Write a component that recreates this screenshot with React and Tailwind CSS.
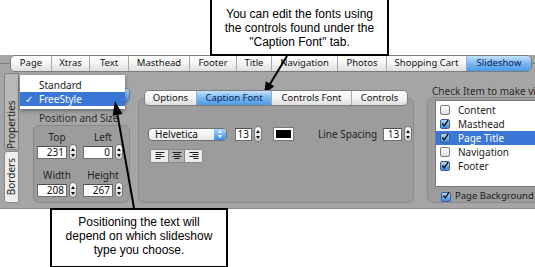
import React from "react";

const topTabs = [
  ["Page", "w-[40px]"],
  ["Xtras", "w-[38px]"],
  ["Text", "w-[39px]"],
  ["Masthead", "w-[61px]"],
  ["Footer", "w-[47px]"],
  ["Title", "w-[35px]"],
  ["Navigation", "w-[66px]"],
  ["Photos", "w-[49px]"],
  ["Shopping Cart", "w-[80px]"],
  ["Slideshow", "w-[65px]", true],
];

const fontTabs = [
  ["Options", "w-[51px]"],
  ["Caption Font", "w-[75px]", true],
  ["Controls Font", "w-[80px]"],
  ["Controls", "w-[56px]"],
];

const items = [
  ["Content", false],
  ["Masthead", true],
  ["Page Title", true, true],
  ["Navigation", false],
  ["Footer", true],
];

function Tab({ label, width, active }) {
  return (
    <div
      className={`${width} flex items-center justify-center border-l border-[#a9a9a9] first:border-l-0 text-[9.5px] whitespace-nowrap ${
        active
          ? "bg-linear-to-b from-[#c4e2fd] via-[#79b8f2] to-[#4d9ae7] text-[#0c2452]"
          : "bg-linear-to-b from-white via-[#f4f4f4] to-[#dedede] text-[#111]"
      }`}
    >
      {label}
    </div>
  );
}

function Stepper() {
  return (
    <div className="w-[8px] h-[16px] shrink-0 rounded-full border border-[#777] bg-linear-to-b from-white to-[#d8d8d8] flex flex-col items-center justify-center gap-[3px]">
      <svg width="4" height="3" viewBox="0 0 4 3">
        <path d="M2 0 L4 3 L0 3 Z" fill="#111" />
      </svg>
      <svg width="4" height="3" viewBox="0 0 4 3">
        <path d="M0 0 L4 0 L2 3 Z" fill="#111" />
      </svg>
    </div>
  );
}

function NumField({ value, width = "w-[30px]" }) {
  return (
    <div className="flex items-center gap-[2px] shrink-0">
      <div
        className={`${width} h-[13px] bg-white border border-[#6e6e6e] border-t-[#4e4e4e] text-right pr-[2px] text-[10px] leading-[11px] text-[#111]`}
      >
        {value}
      </div>
      <Stepper />
    </div>
  );
}

function Field({ label, value }) {
  return (
    <div className="w-[40px] mr-[6px] flex flex-col items-center">
      <div className="h-[12px] text-[10px] leading-[12px] text-[#222]">{label}</div>
      <div className="mt-[1px]">
        <NumField value={value} />
      </div>
    </div>
  );
}

function Check({ on }) {
  return (
    <div
      className={`w-[10px] h-[10px] shrink-0 rounded-[2px] border flex items-center justify-center ${
        on
          ? "border-[#3f5f8c] bg-linear-to-b from-[#b4dafc] to-[#3c8ae0]"
          : "border-[#7a7a7a] bg-linear-to-b from-white to-[#dedede]"
      }`}
    >
      {on && (
        <svg width="9" height="9" viewBox="0 0 9 9" className="-mt-[2px]">
          <path d="M1.5 4.5 L3.7 7.2 L8 0.8" stroke="#111" strokeWidth="1.6" fill="none" />
        </svg>
      )}
    </div>
  );
}

function AlignIcon({ kind }) {
  const lens = [9, 6, 9, 5];
  return (
    <svg width="10" height="8" viewBox="0 0 10 8">
      {lens.map((len, i) => {
        const x = kind === "left" ? 0.5 : kind === "right" ? 9.5 - len : (10 - len) / 2;
        return <rect key={i} x={x} y={i * 2} width={len} height="1" fill="#222" />;
      })}
    </svg>
  );
}

export default function App() {
  return (
    <div className="relative w-[535px] h-[267px] overflow-hidden bg-white [font-family:'Noto_Sans','DejaVu_Sans',sans-serif]">
      <div className="h-[55px]" />

      {/* window */}
      <div className="h-[154px] bg-[#a5a5a5] flex flex-col border-b border-[#8c8c8c]">
        {/* top tab strip */}
        <div className="h-[17px] flex items-center">
          <div className="w-[10px] h-px bg-[#7e7e7e]" />
          <div className="flex h-[17px] rounded-[5px] border border-[#7c7c7c] overflow-hidden">
            {topTabs.map(([label, w, active]) => (
              <Tab key={label} label={label} width={w} active={active} />
            ))}
          </div>
          <div className="flex-1 h-px bg-[#7e7e7e]" />
        </div>

        <div className="flex flex-1">
          {/* vertical tabs */}
          <div className="ml-[4px] w-[15px] shrink-0 flex flex-col pt-[1px]">
            <div className="h-[77px] bg-[#b9b9b9] border border-[#7f7f7f] rounded-l-[3px] flex justify-center pt-[9px]">
              <span className="[writing-mode:vertical-rl] rotate-180 text-[10px] leading-[13px] text-[#222]">
                Properties
              </span>
            </div>
            <div className="h-[52px] mt-[1px] bg-[#eeeeee] border border-[#8a8a8a] rounded-l-[3px] flex items-center justify-center">
              <span className="[writing-mode:vertical-rl] rotate-180 text-[10px] leading-[13px] text-[#222]">
                Borders
              </span>
            </div>
          </div>

          {/* position and size */}
          <div className="ml-[14px] w-[97px] shrink-0 flex flex-col">
            <div className="mt-[16px] h-[15px] ml-[4px] rounded-[4px] border border-[#6f6f6f] bg-white flex justify-end overflow-hidden">
              <div className="w-[12px] bg-linear-to-b from-[#a9d5fc] to-[#3b8ce4]" />
            </div>
            <div className="mt-[9px] pl-[6px] h-[13px] text-[10px] leading-[13px] text-[#2a2a2a] whitespace-nowrap">
              Position and Size
            </div>
            <div className="h-[78px] rounded-[6px] border border-[#8a8a8a] bg-[#9c9c9c] pl-[3px] pt-[5px] flex flex-col">
              <div className="flex">
                <Field label="Top" value="231" />
                <Field label="Left" value="0" />
              </div>
              <div className="flex mt-[9px]">
                <Field label="Width" value="208" />
                <Field label="Height" value="267" />
              </div>
            </div>
          </div>

          {/* font controls */}
          <div className="ml-[8px] w-[276px] shrink-0 flex flex-col items-center pt-[18px]">
            <div className="relative z-10 flex h-[16px] rounded-[5px] border border-[#7c7c7c] overflow-hidden">
              {fontTabs.map(([label, w, active]) => (
                <Tab key={label} label={label} width={w} active={active} />
              ))}
            </div>
            <div className="-mt-[8px] w-full h-[105px] rounded-[6px] border border-[#8a8a8a] bg-[#9c9c9c] pt-[26px] pl-[9px] flex flex-col">
              <div className="h-[18px] flex items-center">
                <div className="w-[79px] h-[13px] shrink-0 rounded-[4px] border border-[#6f6f6f] bg-linear-to-b from-white to-[#e6e6e6] flex overflow-hidden">
                  <div className="flex-1 pl-[6px] text-[10px] leading-[11px] text-[#111]">Helvetica</div>
                  <div className="w-[12px] bg-linear-to-b from-[#a9d5fc] to-[#3b8ce4] flex flex-col items-center justify-center gap-[2px]">
                    <svg width="4" height="3" viewBox="0 0 4 3">
                      <path d="M2 0 L4 3 L0 3 Z" fill="#fff" />
                    </svg>
                    <svg width="4" height="3" viewBox="0 0 4 3">
                      <path d="M0 0 L4 0 L2 3 Z" fill="#fff" />
                    </svg>
                  </div>
                </div>
                <div className="ml-[8px] shrink-0">
                  <NumField value="13" width="w-[17px]" />
                </div>
                <div className="ml-[12px] w-[19px] h-[12px] shrink-0 border-2 border-white outline outline-[#777] bg-black" />
                <div className="ml-[25px] shrink-0 whitespace-nowrap text-[10px] leading-[12px] text-[#222]">
                  Line Spacing
                </div>
                <div className="ml-[6px] shrink-0">
                  <NumField value="13" width="w-[19px]" />
                </div>
              </div>
              <div className="mt-[6px] ml-[2px] flex border border-[#8a8a8a] w-fit">
                <div className="w-[17px] h-[12px] bg-[#ececec] flex items-center justify-center">
                  <AlignIcon kind="left" />
                </div>
                <div className="w-[17px] h-[12px] bg-[#b4b4b4] border-x border-[#8a8a8a] flex items-center justify-center">
                  <AlignIcon kind="center" />
                </div>
                <div className="w-[17px] h-[12px] bg-[#ececec] flex items-center justify-center">
                  <AlignIcon kind="right" />
                </div>
              </div>
            </div>
          </div>

          {/* visibility list */}
          <div className="ml-[13px] w-[130px] shrink-0 flex flex-col pt-[13px]">
            <div className="h-[12px] pl-[5px] text-[10px] leading-[12px] text-[#2a2a2a] whitespace-nowrap">
              Check Item to make visible
            </div>
            <div className="h-[106px] rounded-[6px] border border-[#8a8a8a] bg-[#9c9c9c] flex flex-col">
              <div className="mt-[2px] ml-[7px] h-[87px] bg-white border border-[#7a7a7a] pt-[2px]">
                {items.map(([label, on, sel]) => (
                  <div
                    key={label}
                    className={`h-[14px] flex items-center pl-[4px] gap-[8px] text-[10px] ${
                      sel ? "bg-[#3a76d6] text-white" : "text-[#1a1a1a]"
                    }`}
                  >
                    <Check on={on} />
                    <span>{label}</span>
                  </div>
                ))}
              </div>
              <div className="mt-[4px] ml-[13px] h-[11px] flex items-center gap-[4px] text-[9.5px] text-[#1a1a1a] whitespace-nowrap">
                <Check on />
                <span>Page Background</span>
              </div>
            </div>
          </div>
        </div>
      </div>

      {/* popup menu */}
      <div className="absolute left-[20px] top-[75px] w-[105px] h-[34px] bg-white shadow-[0_2px_4px_rgba(0,0,0,0.35)] pt-[3px]">
        <div className="h-[14px] pl-[19px] flex items-center text-[10px] text-[#1a1a1a]">Standard</div>
        <div className="h-[14px] flex items-center text-[10px] text-white bg-[#3a76d6]">
          <span className="w-[19px] pl-[5px]">✓</span>
          <span>FreeStyle</span>
        </div>
      </div>

      {/* callouts */}
      <div className="absolute left-[210px] top-[-2px] w-[179px] h-[58px] border-2 border-black bg-white pt-[7px] text-center text-[12px] leading-[14px] text-black [font-family:'Liberation_Sans',Arial,sans-serif]">
        <div>You can edit the fonts using</div>
        <div>the controls found under the</div>
        <div>"Caption Font" tab.</div>
      </div>
      <div className="absolute left-[50px] top-[208px] w-[178px] h-[60px] border-2 border-black bg-white pt-[5px] text-center text-[12px] leading-[14px] text-black [font-family:'Liberation_Sans',Arial,sans-serif]">
        <div>Positioning the text will</div>
        <div>depend on which slideshow</div>
        <div>type you choose.</div>
      </div>

      <svg className="absolute left-0 top-0 pointer-events-none" width="535" height="267" viewBox="0 0 535 267">
        <line x1="287" y1="56" x2="270" y2="84" stroke="#000" strokeWidth="2" />
        <polygon points="264,94 274.4,86.2 265.8,81.2" fill="#000" />
        <line x1="134" y1="208" x2="117.5" y2="114.8" stroke="#000" strokeWidth="2" />
        <polygon points="115,101 122.4,113.9 112.6,115.7" fill="#000" />
      </svg>
    </div>
  );
}
